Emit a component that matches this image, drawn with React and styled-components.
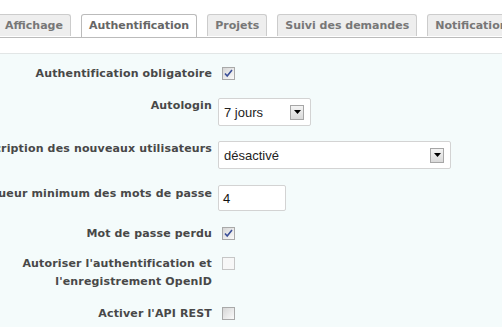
import React from 'react';
import styled, { createGlobalStyle } from 'styled-components';

const GlobalStyle = createGlobalStyle`
  html, body {
    margin: 0;
    padding: 0;
    background: #fff;
    overflow: hidden;
  }
  body {
    width: 502px;
    height: 327px;
    font-family: "DejaVu Sans", Verdana, sans-serif;
  }
`;

const Page = styled.div`
  width: 502px;
  height: 327px;
  overflow: hidden;
`;

const TabBar = styled.ul`
  display: flex;
  gap: 10px;
  list-style: none;
  margin: 0;
  padding: 14px 0 0 0;
  margin-left: -3px;
  border-bottom: 1px solid #bbbbbb;
  height: 23px;
  box-sizing: content-box;
  white-space: nowrap;
`;

const Tab = styled.li`
  flex: none;
  height: ${p => (p.$selected ? '23px' : '22px')};
  margin-bottom: ${p => (p.$selected ? '-1px' : '0')};
  padding: 0 7px;
  box-sizing: border-box;
  border: 1px solid ${p => (p.$selected ? '#bbbbbb' : '#cccccc')};
  border-bottom: ${p => (p.$selected ? 'none' : '0')};
  border-radius: 3px 3px 0 0;
  background: ${p => (p.$selected ? '#fff' : '#eeeeee')};
  color: ${p => (p.$selected ? '#666' : '#777')};
  font-size: 11px;
  font-weight: bold;
  line-height: 21px;
`;

const Box = styled.div`
  margin-top: 15px;
  border-top: 1px solid #e2e6e6;
  background: #f4fbfb;
  padding-top: 11px;
  height: 300px;
`;

const Row = styled.div`
  display: flex;
  align-items: flex-start;
  height: ${p => p.$h}px;
`;

const Label = styled.div`
  flex: none;
  width: 212px;
  display: flex;
  justify-content: flex-end;
  margin-right: ${p => (p.$check ? '10px' : '6px')};
`;

const LabelText = styled.span`
  font-size: 11px;
  font-weight: bold;
  line-height: 18px;
  color: #484848;
  text-align: right;
  white-space: ${p => (p.$wrap ? 'normal' : 'nowrap')};
  letter-spacing: 0.15px;
`;

const CheckBox = styled.span`
  flex: none;
  margin-top: 2px;
  width: 13px;
  height: 13px;
  box-sizing: border-box;
  border: 1px solid ${p => (p.$disabled ? '#c6c6c6' : '#a9a9a9')};
  background: ${p =>
    p.$disabled
      ? '#f7f7f7'
      : 'linear-gradient(135deg, #d6d6d6 0%, #ececec 60%, #fafafa 100%)'};
  display: flex;
  align-items: center;
  justify-content: center;
`;

const SelectBox = styled.div`
  flex: none;
  margin-top: 1px;
  width: ${p => p.$w}px;
  height: 28px;
  box-sizing: border-box;
  border: 1px solid #d3d3d3;
  border-radius: 2px;
  background: #fff;
  display: flex;
  align-items: center;
  justify-content: space-between;
  padding: 0 6px 0 5px;
  font-family: "Liberation Sans", Arial, sans-serif;
  font-size: 13px;
  color: #222;
`;

const Arrow = styled.span`
  width: 14px;
  height: 15px;
  box-sizing: border-box;
  border: 1px solid #a6a6a6;
  background: linear-gradient(180deg, #f4f4f4 0%, #d9d9d9 100%);
  display: flex;
  align-items: center;
  justify-content: center;
`;

const TextInput = styled.div`
  flex: none;
  width: 68px;
  height: 26px;
  box-sizing: border-box;
  border: 1px solid #d3d3d3;
  border-radius: 2px;
  background: #fff;
  padding: 0 4px;
  display: flex;
  align-items: center;
  font-family: "Liberation Sans", Arial, sans-serif;
  font-size: 13px;
  color: #111;
`;

function Check({ checked, disabled }) {
  return (
    <CheckBox $disabled={disabled}>
      {checked && (
        <svg width="9" height="9" viewBox="0 0 9 9">
          <path d="M1 4.5 L3.2 7 L8 1" fill="none" stroke="#3a4f98" strokeWidth="1.6" />
        </svg>
      )}
    </CheckBox>
  );
}

function Select({ width, value }) {
  return (
    <SelectBox $w={width}>
      <span>{value}</span>
      <Arrow>
        <svg width="7" height="4" viewBox="0 0 7 4">
          <path d="M0 0 H7 L3.5 4 Z" fill="#000" />
        </svg>
      </Arrow>
    </SelectBox>
  );
}

const tabs = ['Affichage', 'Authentification', 'Projets', 'Suivi des demandes', 'Notifications'];

export default function App() {
  return (
    <Page>
      <GlobalStyle />
      <TabBar>
        {tabs.map(t => (
          <Tab key={t} $selected={t === 'Authentification'}>{t}</Tab>
        ))}
      </TabBar>
      <Box>
        <Row $h={32}>
          <Label $check><LabelText>Authentification obligatoire</LabelText></Label>
          <Check checked />
        </Row>
        <Row $h={43}>
          <Label><LabelText>Autologin</LabelText></Label>
          <Select width={93} value="7 jours" />
        </Row>
        <Row $h={45}>
          <Label><LabelText>Inscription des nouveaux utilisateurs</LabelText></Label>
          <Select width={233} value="désactivé" />
        </Row>
        <Row $h={40}>
          <Label><LabelText>Longueur minimum des mots de passe</LabelText></Label>
          <TextInput>4</TextInput>
        </Row>
        <Row $h={30}>
          <Label $check><LabelText>Mot de passe perdu</LabelText></Label>
          <Check checked />
        </Row>
        <Row $h={50}>
          <Label $check>
            <LabelText $wrap>Autoriser l'authentification et l'enregistrement OpenID</LabelText>
          </Label>
          <Check disabled />
        </Row>
        <Row $h={30}>
          <Label $check><LabelText>Activer l'API REST</LabelText></Label>
          <Check />
        </Row>
      </Box>
    </Page>
  );
}
